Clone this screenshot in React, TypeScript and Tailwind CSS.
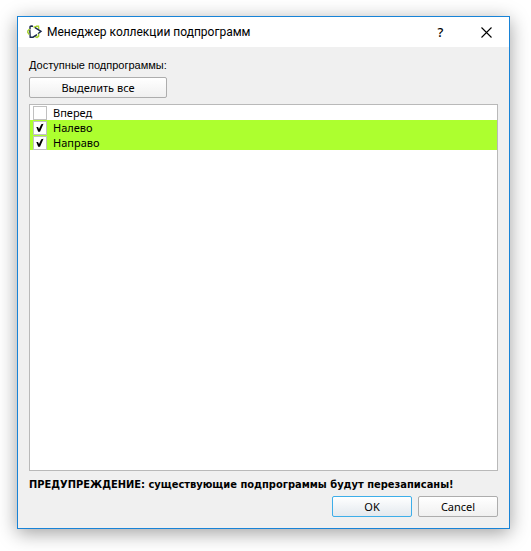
import { useState } from "react";

const initial = [
  { name: "Вперед", checked: false },
  { name: "Налево", checked: true },
  { name: "Направо", checked: true },
];

function Logo() {
  return (
    <svg width="16" height="14" viewBox="0 0 16 14" fill="none" strokeWidth="1.4" aria-hidden="true">
      <path d="M3 4.5 L3 2 Q3 1 4.2 1 L6 1.2" stroke="#1b2a4e" />
      <path d="M6.5 1.6 L8 2.4 L9.5 1.2 L11.5 1.2 L11.8 3.8" stroke="#a4cf2a" />
      <path d="M8 2.6 L14 6.4 L11 8.7" stroke="#1b2a4e" />
      <path d="M11.6 8.8 L11.6 11.4 L10 12.4 L7.8 11.4" stroke="#a4cf2a" />
      <path d="M10 9.6 L6 12.2 L3.2 12.2 L2.8 5" stroke="#1b2a4e" />
      <path d="M2.6 4 L0.8 6 L0.8 7.5 L2.4 9.6" stroke="#a4cf2a" />
    </svg>
  );
}

export default function App() {
  const [items, setItems] = useState(initial);
  const toggle = (name: string) =>
    setItems(items.map((i) => (i.name === name ? { ...i, checked: !i.checked } : i)));

  return (
    <div className="flex min-h-screen bg-white pt-4 pr-[21px] pb-[22px] pl-[17px] font-['Noto_Sans',sans-serif] text-[11px] leading-[15px] text-black">
      <main className="flex flex-1 flex-col border border-[#1883d7] bg-[#f0f0f0] shadow-[0_4px_18px_rgba(0,0,0,0.38)]">
        <header className="flex h-[30px] items-center bg-white pl-[9px]">
          <Logo />
          <h1 className="ml-1 flex-1 font-['Roboto',sans-serif] text-[12px]">Менеджер коллекции подпрограмм</h1>
          <button aria-label="Справка" className="flex h-full w-[45px] items-center justify-center text-[13px] font-medium">
            ?
          </button>
          <button aria-label="Закрыть" className="flex h-full w-[46px] items-center justify-center">
            <svg width="11" height="11" viewBox="0 0 11 11" stroke="#000" strokeWidth="1.1" aria-hidden="true">
              <path d="M0.5 0.5 L10.5 10.5 M10.5 0.5 L0.5 10.5" />
            </svg>
          </button>
        </header>
        <div className="flex flex-1 flex-col px-[11px] pt-[11px] pb-[11px]">
          <p id="list-label" className="font-['Liberation_Sans',sans-serif]">Доступные подпрограммы:</p>
          <button
            onClick={() => setItems(items.map((i) => ({ ...i, checked: true })))}
            className="mt-1 h-[21px] w-[138px] rounded-[2px] border border-[#adadad] bg-linear-to-b from-white to-[#f0f0f0]"
          >
            Выделить все
          </button>
          <ul aria-labelledby="list-label" className="mt-1.5 flex-1 border border-[#b9b9b9] bg-white">
            {items.map((i) => (
              <li key={i.name} className={i.checked ? "bg-[#adff2f]" : "bg-white"}>
                <label className="flex h-[15px] items-center gap-1.5 pl-[3px]">
                  <span className="grid size-[14px]">
                    <input
                      type="checkbox"
                      checked={i.checked}
                      onChange={() => toggle(i.name)}
                      className="col-start-1 row-start-1 size-[14px] appearance-none border border-[#c0c0c0] bg-white"
                    />
                    {i.checked && (
                      <svg viewBox="0 0 14 14" className="pointer-events-none col-start-1 row-start-1 size-[14px]" fill="none" aria-hidden="true">
                        <path d="M3.3 6 L5 6 L6 8 L8.3 3.3 L10.5 2.8 L7 10.7 L5.2 10.7 Z" fill="#000" />
                      </svg>
                    )}
                  </span>
                  {i.name}
                </label>
              </li>
            ))}
          </ul>
          <p className="mt-1.5 font-['DejaVu_Sans_Condensed','DejaVu_Sans',sans-serif] font-bold">
            ПРЕДУПРЕЖДЕНИЕ: существующие подпрограммы будут перезаписаны!
          </p>
          <div className="mt-1 flex justify-end gap-1.5">
            <button className="h-[21px] w-20 rounded-[2px] border border-[#3daee9] bg-linear-to-b from-white to-[#e3e9ee]">OK</button>
            <button className="h-[21px] w-20 rounded-[2px] border border-[#adadad] bg-linear-to-b from-white to-[#f0f0f0]">Cancel</button>
          </div>
        </div>
      </main>
    </div>
  );
}
